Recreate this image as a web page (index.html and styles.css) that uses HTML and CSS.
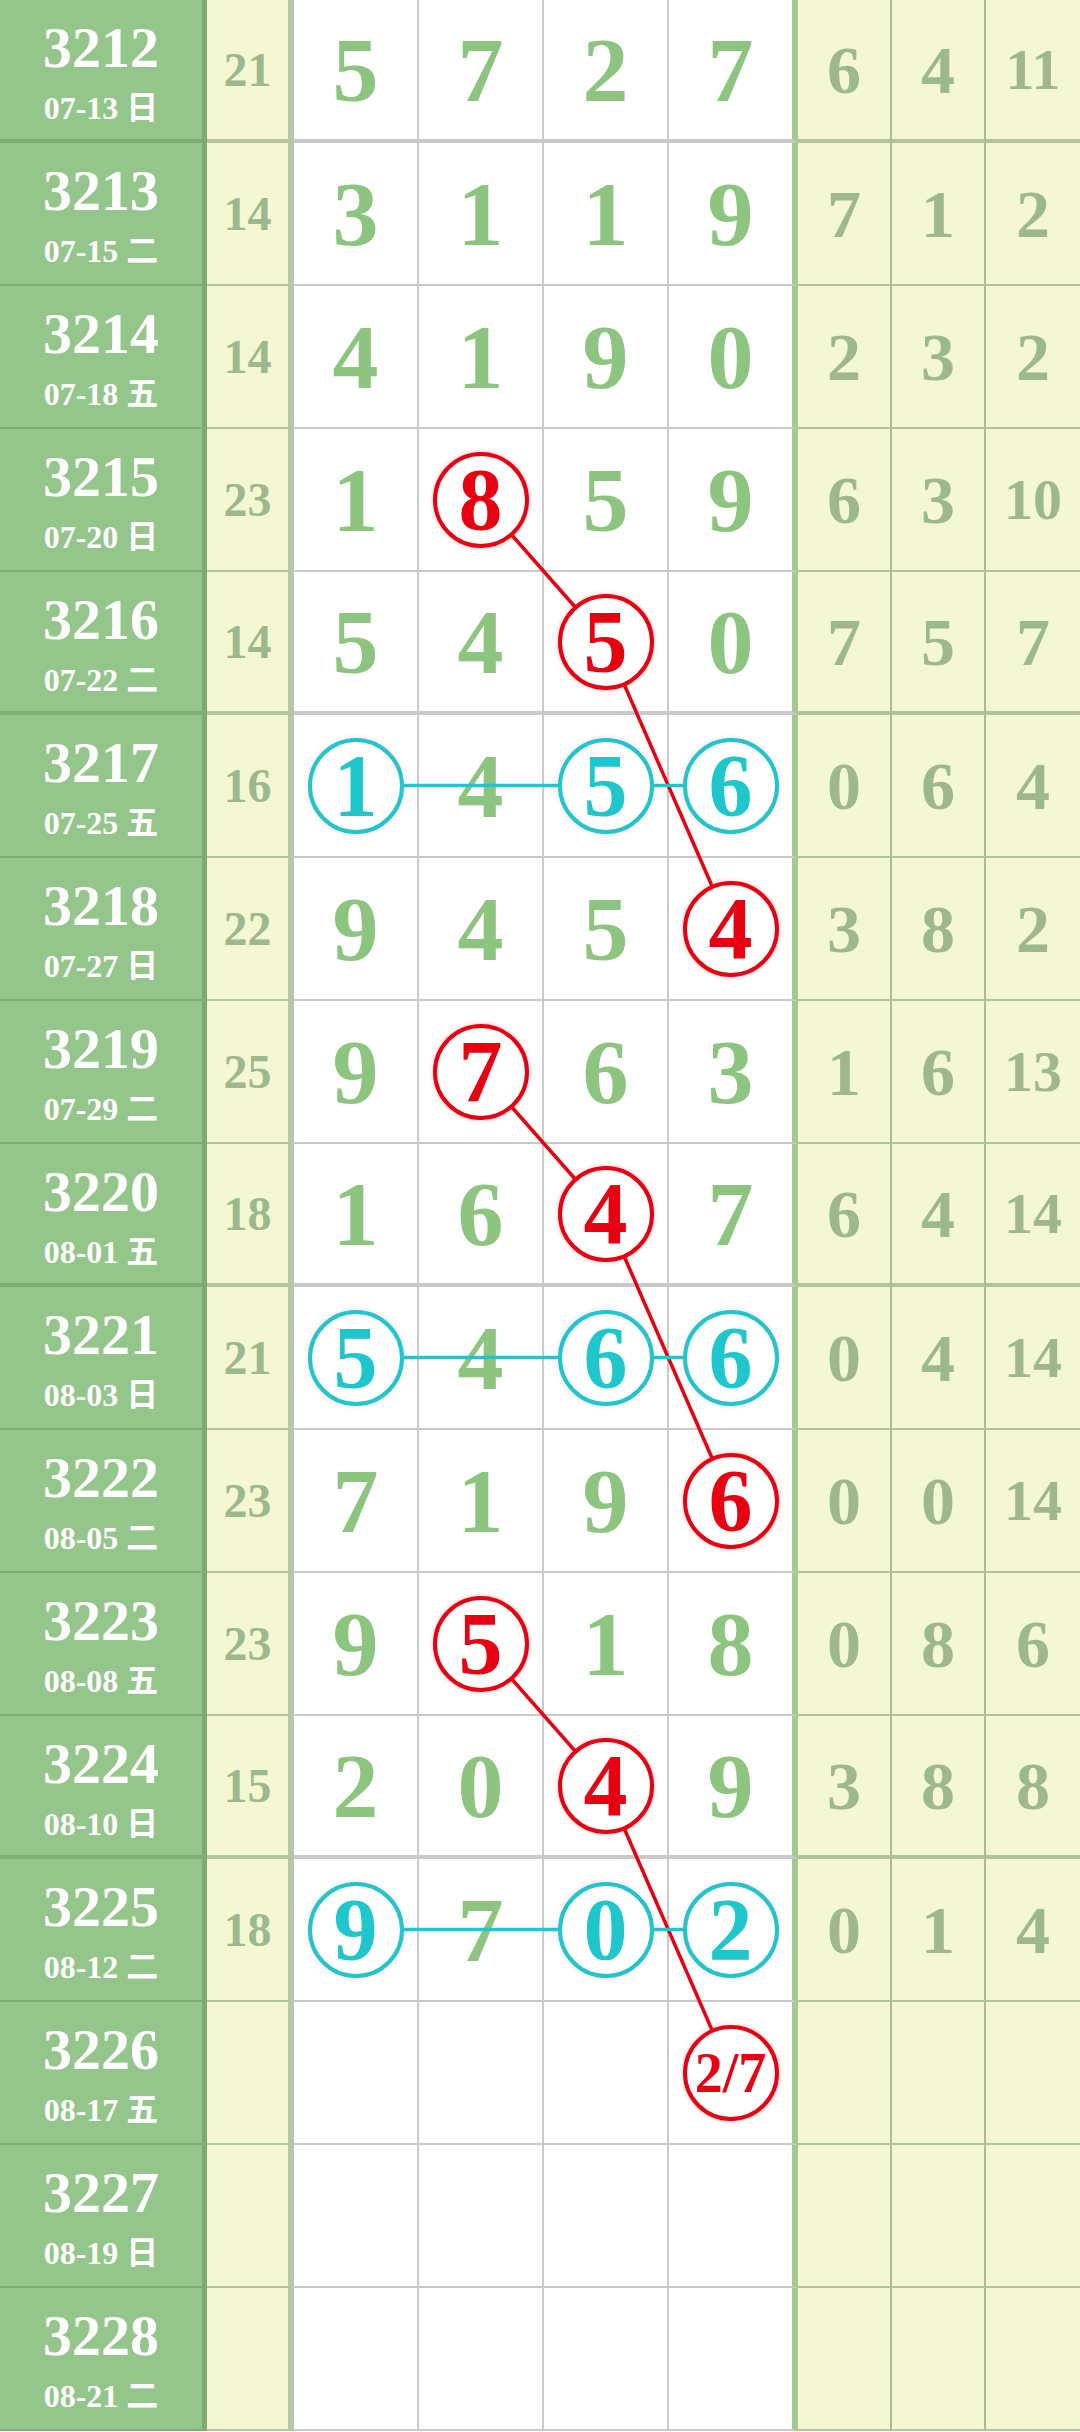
FILE: index.html
```html
<!DOCTYPE html>
<html lang="zh">
<head>
  <meta charset="UTF-8">
  <title>走势图</title>
  <link rel="stylesheet" href="styles.css">
</head>
<body>
  <div class="chart" id="chart">
    <svg class="links" id="links" xmlns="http://www.w3.org/2000/svg"></svg>
  </div>

<script>
// issue, date, weekday, sum, four digits, three misses
const rows = [
  ["3212", "07-13", "日", 21, [5, 7, 2, 7], [6, 4, 11]],
  ["3213", "07-15", "二", 14, [3, 1, 1, 9], [7, 1, 2]],
  ["3214", "07-18", "五", 14, [4, 1, 9, 0], [2, 3, 2]],
  ["3215", "07-20", "日", 23, [1, 8, 5, 9], [6, 3, 10]],
  ["3216", "07-22", "二", 14, [5, 4, 5, 0], [7, 5, 7]],
  ["3217", "07-25", "五", 16, [1, 4, 5, 6], [0, 6, 4]],
  ["3218", "07-27", "日", 22, [9, 4, 5, 4], [3, 8, 2]],
  ["3219", "07-29", "二", 25, [9, 7, 6, 3], [1, 6, 13]],
  ["3220", "08-01", "五", 18, [1, 6, 4, 7], [6, 4, 14]],
  ["3221", "08-03", "日", 21, [5, 4, 6, 6], [0, 4, 14]],
  ["3222", "08-05", "二", 23, [7, 1, 9, 6], [0, 0, 14]],
  ["3223", "08-08", "五", 23, [9, 5, 1, 8], [0, 8, 6]],
  ["3224", "08-10", "日", 15, [2, 0, 4, 9], [3, 8, 8]],
  ["3225", "08-12", "二", 18, [9, 7, 0, 2], [0, 1, 4]],
  ["3226", "08-17", "五", "", ["", "", "", "2/7"], ["", "", ""]],
  ["3227", "08-19", "日", "", ["", "", "", ""], ["", "", ""]],
  ["3228", "08-21", "二", "", ["", "", "", ""], ["", "", ""]]
];

// thick line under these rows
const groupEnds = ["3212", "3216", "3220", "3224"];

// red diagonal chains: [issue, column]
const redChains = [
  [["3215", 1], ["3216", 2], ["3218", 3]],
  [["3219", 1], ["3220", 2], ["3222", 3]],
  [["3223", 1], ["3224", 2], ["3226", 3]]
];

// cyan rows: issue -> circled columns
const cyanRows = [
  ["3217", [0, 2, 3]],
  ["3221", [0, 2, 3]],
  ["3225", [0, 2, 3]]
];

function ballKind(issue, col) {
  for (const chain of redChains) {
    if (chain.some(([i, c]) => i === issue && c === col)) return "red";
  }
  for (const [i, cols] of cyanRows) {
    if (i === issue && cols.includes(col)) return "cyan";
  }
  return null;
}

function makeCell(cls, text) {
  const div = document.createElement("div");
  div.className = "cell " + cls;
  if (text !== undefined) div.textContent = text;
  return div;
}

function buildChart() {
  const chart = document.getElementById("chart");

  rows.forEach(([issue, date, day, sum, nums, misses]) => {
    const row = document.createElement("div");
    row.className = groupEnds.includes(issue) ? "row sep" : "row";

    const head = makeCell("issue");
    head.innerHTML = `<span class="no">${issue}</span><span class="date">${date} ${day}</span>`;
    row.appendChild(head);

    row.appendChild(makeCell("sum", sum));

    nums.forEach((n, col) => {
      const cell = makeCell("num");
      const kind = ballKind(issue, col);
      if (kind) {
        const ball = document.createElement("span");
        ball.className = "ball " + kind + (String(n).length > 1 ? " small" : "");
        ball.id = `b-${issue}-${col}`;
        ball.textContent = n;
        cell.appendChild(ball);
      } else {
        cell.textContent = n;
      }
      row.appendChild(cell);
    });

    misses.forEach(m => {
      row.appendChild(makeCell(String(m).length > 1 ? "miss wide" : "miss", m));
    });

    chart.appendChild(row);
  });
}

function centerOf(id, base) {
  const r = document.getElementById(id).getBoundingClientRect();
  return [r.left + r.width / 2 - base.left, r.top + r.height / 2 - base.top];
}

function addLine(svg, a, b, cls) {
  const line = document.createElementNS("http://www.w3.org/2000/svg", "line");
  line.setAttribute("x1", a[0]);
  line.setAttribute("y1", a[1]);
  line.setAttribute("x2", b[0]);
  line.setAttribute("y2", b[1]);
  line.setAttribute("class", cls);
  svg.appendChild(line);
}

function drawLinks() {
  const chart = document.getElementById("chart");
  const svg = document.getElementById("links");
  const base = chart.getBoundingClientRect();
  svg.setAttribute("width", base.width);
  svg.setAttribute("height", base.height);

  redChains.forEach(chain => {
    for (let k = 1; k < chain.length; k++) {
      const a = centerOf(`b-${chain[k - 1][0]}-${chain[k - 1][1]}`, base);
      const b = centerOf(`b-${chain[k][0]}-${chain[k][1]}`, base);
      addLine(svg, a, b, "red-line");
    }
  });

  cyanRows.forEach(([issue, cols]) => {
    const a = centerOf(`b-${issue}-${cols[0]}`, base);
    const b = centerOf(`b-${issue}-${cols[cols.length - 1]}`, base);
    addLine(svg, a, b, "cyan-line");
  });
}

buildChart();
drawLinks();
</script>
</body>
</html>
```

FILE: styles.css
```css
body {
  margin: 0;
  background: #fff;
  font-family: "Liberation Serif", "Noto Sans CJK SC", serif;
}

.chart {
  position: relative;
  width: 1080px;
}

.links {
  position: absolute;
  left: 0;
  top: 0;
  z-index: 1;
  pointer-events: none;
}

.red-line {
  stroke: #e60012;
  stroke-width: 3.5;
}

.cyan-line {
  stroke: #22c5cc;
  stroke-width: 3.5;
}

.row {
  display: flex;
  height: 143px;
}

.cell {
  box-sizing: border-box;
  height: 100%;
  display: flex;
  align-items: center;
  justify-content: center;
  font-weight: bold;
  line-height: 1;
  border-bottom: 2px solid #c9c9c9;
}

.sep .cell {
  border-bottom-width: 4px;
}

.issue {
  width: 207px;
  flex-direction: column;
  justify-content: flex-start;
  padding-top: 19px;
  background: #94c58a;
  color: #fff;
  border-right: 5px solid #7dab72;
  border-bottom-color: #7fad74;
}

.issue .no {
  font-size: 58px;
  line-height: 58px;
}

.issue .date {
  font-size: 32px;
  line-height: 40px;
  margin-top: 11px;
}

.sum {
  width: 87px;
  background: #f3f8d3;
  color: #9db88c;
  font-size: 48px;
  border-right: 6px solid #b6c8a9;
  border-bottom-color: #b3c59f;
}

.num {
  width: 125px;
  background: #fff;
  color: #8dc47f;
  font-size: 92px;
  border-right: 2px solid #cacaca;
}

.num:nth-child(6) {
  width: 129px;
  border-right: 6px solid #a8c891;
}

.miss {
  width: 94px;
  background: #f3f8d3;
  color: #9db88c;
  font-size: 68px;
  border-right: 2px solid #a9bd93;
  border-bottom-color: #b0c39b;
}

.miss:last-child {
  border-right: none;
}

.miss.wide {
  font-size: 58px;
}

.ball {
  position: relative;
  z-index: 2;
  box-sizing: border-box;
  width: 96px;
  height: 96px;
  border-radius: 50%;
  border: 4px solid;
  background: #fff;
  display: flex;
  align-items: center;
  justify-content: center;
  font-size: 88px;
}

.ball.red {
  color: #e60012;
  border-color: #e60012;
  box-shadow: 0 0 5px rgba(230, 0, 18, 0.25);
}

.ball.cyan {
  color: #1fc6cc;
  border-color: #22c5cc;
  box-shadow: 0 0 5px rgba(240, 110, 160, 0.3);
}

.ball.small {
  font-size: 56px;
}
```
